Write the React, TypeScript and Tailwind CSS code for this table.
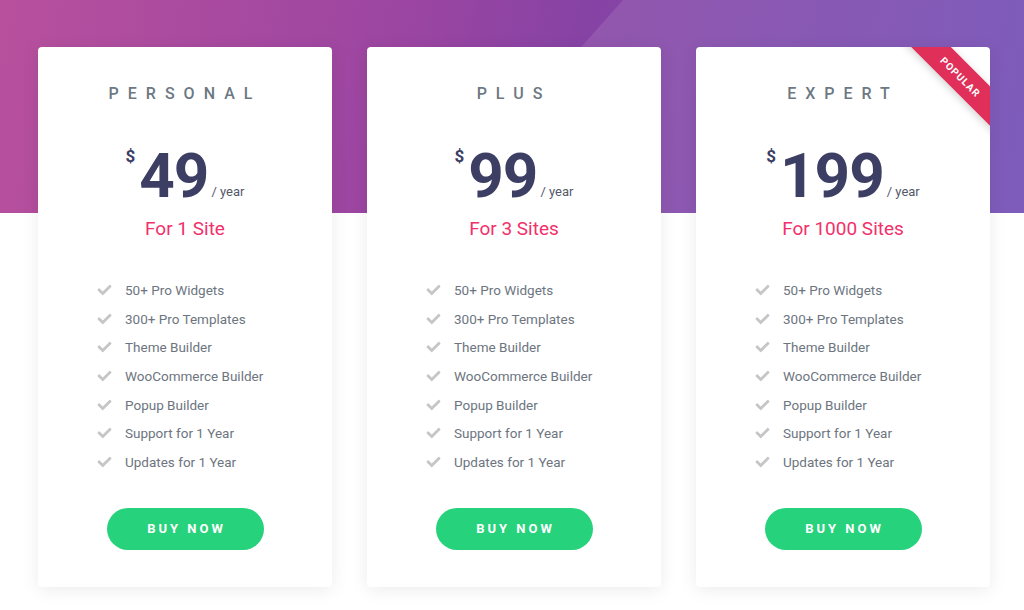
import { FaCheck } from "react-icons/fa";

type Plan = {
  name: string;
  price: string;
  sites: string;
  popular?: boolean;
};

const plans: Plan[] = [
  { name: "PERSONAL", price: "49", sites: "For 1 Site" },
  { name: "PLUS", price: "99", sites: "For 3 Sites" },
  { name: "EXPERT", price: "199", sites: "For 1000 Sites", popular: true },
];

const features = [
  "50+ Pro Widgets",
  "300+ Pro Templates",
  "Theme Builder",
  "WooCommerce Builder",
  "Popup Builder",
  "Support for 1 Year",
  "Updates for 1 Year",
];

function PlanCard({ plan }: { plan: Plan }) {
  return (
    <div className="relative flex h-[540px] w-[294px] flex-col items-center overflow-hidden rounded-[4px] bg-white shadow-[0_3px_18px_rgba(0,0,0,0.08)]">
      {plan.popular && (
        <div className="absolute -right-[45px] top-[15px] flex h-[28px] w-[150px] rotate-45 items-center justify-center bg-[#e0305a] shadow-[0_2px_8px_rgba(0,0,0,0.18)]">
          <span className="pl-[2px] text-[10px] font-bold tracking-[1px] text-white">POPULAR</span>
        </div>
      )}

      <h3 className="mt-[38px] text-[16px] leading-[18px] font-medium tracking-[9px] text-[#6d7883]">
        {plan.name}
      </h3>

      <div className="mt-[42px] flex items-start text-[#3d3e63]">
        <span className="mt-[3px] mr-[4px] text-[17px] leading-none font-bold">$</span>
        <span className="text-[62px] leading-none font-bold tracking-[-1px]">{plan.price}</span>
        <span className="mt-[40px] ml-[3px] text-[13px] leading-none text-[#54596a]">/ year</span>
      </div>

      <div className="mt-[10px] text-[19px] leading-[24px] text-[#f2306b]">{plan.sites}</div>

      <ul className="mt-[35px] self-start pl-[59px]">
        {features.map((f) => (
          <li key={f} className="flex h-[28.6px] items-center">
            <FaCheck className="h-[14px] w-[15px] text-[#c6c6c6]" />
            <span className="ml-[13px] text-[13.5px] text-[#6d7580]">{f}</span>
          </li>
        ))}
      </ul>

      <button className="mt-[32px] h-[42px] w-[157px] rounded-full bg-[#26d27c] pl-[3px] text-[13px] font-bold tracking-[3px] text-white">
        BUY NOW
      </button>
    </div>
  );
}

export default function App() {
  return (
    <div className="relative h-[610px] w-[1024px] overflow-hidden bg-white font-['Roboto',sans-serif]">
      <div className="absolute inset-x-0 top-0 h-[213px] bg-[linear-gradient(100deg,#b8509d_0%,#9a45a2_40%,#8743a4_55%,#6f4ab3_100%)]">
        <div className="absolute inset-0 bg-white/10 [clip-path:polygon(623px_0,1024px_0,1024px_213px,434px_213px)]" />
      </div>

      <div className="relative flex gap-[35px] pt-[47px] pl-[38px]">
        {plans.map((p) => (
          <PlanCard key={p.name} plan={p} />
        ))}
      </div>
    </div>
  );
}
